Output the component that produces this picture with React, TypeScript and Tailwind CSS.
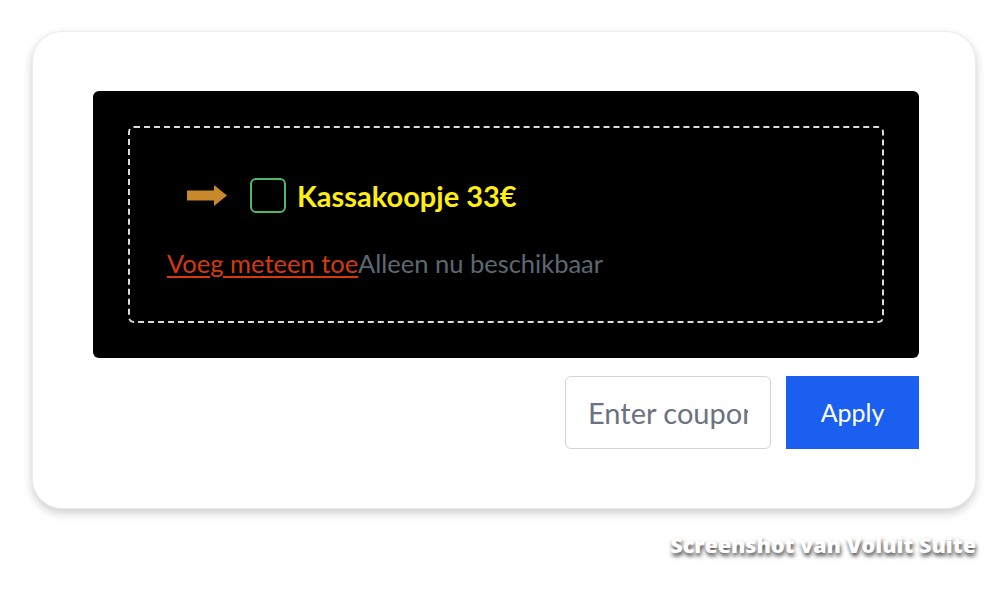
export default function App() {
  return (
    <div className="min-h-[590px] w-[1008px] bg-white pt-[31px] pl-[32px] font-['Lato','Noto_Sans',sans-serif]">
      <div className="w-[944px] rounded-[30px] border border-[#ececec] bg-white pt-[59px] pb-[59px] pl-[60px] shadow-[0_4px_10px_rgba(0,0,0,0.2)]">
        <div className="w-[826px] rounded-[6px] bg-black p-[35px]">
          <div className="rounded-[6px] border-2 border-dashed border-[#dcdcdc] pt-[50px] pb-[43px] pl-[37px]">
            <div className="ml-[20px] flex items-center">
              <svg width="40" height="21" viewBox="0 0 40 21" className="mr-[23px]">
                <path d="M0 5.5H27V0L40 10.5L27 21V15.5H0Z" fill="#c8882c" />
              </svg>
              <span className="h-[35px] w-[36px] rounded-[6px] border-[2.5px] border-[#4cb86a]" />
              <span className="ml-[11px] text-[29px] font-bold leading-[34px] text-[#ffee11]">
                Kassakoopje 33€
              </span>
            </div>
            <div className="mt-[35px] text-[25.5px] leading-[30px]">
              <a className="text-[#d43a0c] underline decoration-2 underline-offset-[3px]">
                Voeg meteen toe
              </a>
              <span className="text-[#5d6872]">Alleen nu beschikbaar</span>
            </div>
          </div>
        </div>
        <div className="mt-[18px] flex w-[826px] justify-end gap-[15px]">
          <input
            placeholder="Enter coupon"
            className="h-[73px] w-[206px] rounded-[6px] border border-[#d1d5db] bg-white px-[22px] text-[29px] text-[#374151] outline-none placeholder:text-[#6b7280]"
          />
          <button
            type="button"
            className="h-[73px] w-[133px] bg-[#1a5ff0] text-[25px] text-white"
          >
            Apply
          </button>
        </div>
      </div>
      <div className="mt-[22px] w-[944px] text-right font-['Open_Sans',sans-serif] text-[21.5px] leading-[28px] font-extrabold text-white [text-shadow:1px_3px_4px_rgba(0,0,0,0.75)]">
        Screenshot van Voluit Suite
      </div>
    </div>
  );
}
